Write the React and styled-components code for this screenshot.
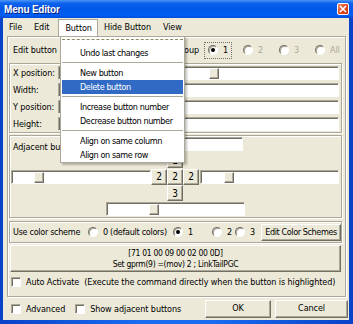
import React from 'react';
import styled, { createGlobalStyle, css } from 'styled-components';

const GlobalStyle = createGlobalStyle`
  *, *::before, *::after { box-sizing: border-box; }
  html, body { margin: 0; padding: 0; }
  body {
    font-family: "DejaVu Sans Condensed", "DejaVu Sans", "Liberation Sans", sans-serif;
    font-stretch: condensed;
    font-size: 9px;
    letter-spacing: -0.1px;
    color: #000;
  }
`;

const etched = css`
  border: 1px solid #aca899;
  box-shadow: 1px 1px 0 #fff, inset 1px 1px 0 #fff;
`;

const raised = css`
  background: #ece9d8;
  border: 1px solid;
  border-color: #fff #716f64 #716f64 #fff;
  box-shadow: inset -1px -1px 0 #aca899;
`;

const sunken = css`
  background: #fff;
  border: 1px solid;
  border-color: #aca899 #fff #fff #aca899;
  box-shadow: inset 1px 1px 0 #716f64;
`;

const Window = styled.div`
  width: 353px;
  height: 324px;
  display: flex;
  flex-direction: column;
  background: linear-gradient(to right, #0842c8, #1a6cf0 40%, #1a6cf0 60%, #0842c8);
  overflow: hidden;
`;

const TitleBar = styled.div`
  height: 18px;
  flex: none;
  display: flex;
  align-items: center;
  justify-content: space-between;
  padding: 0 4px 0 4px;
  background: linear-gradient(to bottom, #4a97f8 0%, #0d62ec 18%, #0058ea 50%, #005ef4 85%, #004bd8 100%);
`;

const Title = styled.span`
  font-family: "Liberation Sans", sans-serif;
  font-weight: bold;
  font-size: 10px;
  letter-spacing: -0.2px;
  color: #fff;
  text-shadow: 1px 1px 0 #0a1f80;
`;

const CloseBox = styled.div`
  width: 12px;
  height: 12px;
  border: 1px solid #fff;
  border-radius: 2px;
  background: linear-gradient(135deg, #f08a68, #e0441c 60%, #c8340e);
  display: flex;
  align-items: center;
  justify-content: center;
`;

const Frame = styled.div`
  flex: 1;
  margin: 0 4px 4px 3px;
  background: #ece9d8;
  position: relative;
  display: flex;
  flex-direction: column;
`;

const MenuBar = styled.div`
  height: 18px;
  flex: none;
  display: flex;
  align-items: stretch;
`;

const MenuItem = styled.div`
  padding: 0 6px;
  display: flex;
  align-items: center;
  position: relative;
  z-index: 2;
  ${p => p.$open && css`
    background: #fff;
    border: 1px solid #aca899;
    border-bottom: none;
    margin: 1px 0 0 3px;
    padding: 0 5px 0 6px;
  `}
`;

const Dropdown = styled.div`
  position: absolute;
  left: 57px;
  top: 18px;
  width: 125px;
  background: #fff;
  border: 1px solid #aca899;
  box-shadow: 2px 2px 2px rgba(0, 0, 0, 0.25);
  z-index: 1;
  display: flex;
  flex-direction: column;
  padding: 0 1px;
  letter-spacing: -0.4px;
`;

const TearOff = styled.div`
  height: 9px;
  padding-top: 2px;
  &::before {
    content: "";
    display: block;
    border-top: 1px dashed #8d8961;
  }
`;

const DropItem = styled.div`
  height: 14px;
  display: flex;
  align-items: center;
  padding-left: 18px;
  ${p => p.$active && css`
    background: #316ac5;
    color: #fff;
  `}
`;

const DropSep = styled.div`
  height: 6px;
  padding-top: 2px;
  &::before {
    content: "";
    display: block;
    border-top: 1px solid #aca899;
  }
`;

const Outer = styled.div`
  ${etched};
  margin: 0 3px 0 4px;
  height: 261px;
  flex: none;
  display: flex;
  flex-direction: column;
`;

const HeaderRow = styled.div`
  height: 26px;
  display: flex;
  align-items: center;
  padding: 0 0 0 5px;
`;

const RadioGroup = styled.div`
  margin-left: auto;
  display: flex;
  align-items: center;
`;

const GroupLabel = styled.span`
  margin-right: 5px;
`;

const RadioOpt = styled.label`
  display: flex;
  align-items: center;
  gap: 5px;
  height: 17px;
  flex: none;
  white-space: nowrap;
  width: ${p => (p.$w ? `${p.$w}px` : 'auto')};
  color: ${p => (p.$disabled ? '#aca899' : '#000')};
  ${p => p.$focused && css`
    outline: 1px dotted #6f6f6f;
    outline-offset: -1px;
    padding-left: 4px;
    margin-right: 11px;
  `}
`;

const RadioDot = styled.span`
  width: 10px;
  height: 10px;
  border-radius: 50%;
  border: 1px solid;
  border-color: #716f64 #fff #fff #716f64;
  background: #fff;
  box-shadow: inset 1px 1px 0 #aca899;
  display: flex;
  align-items: center;
  justify-content: center;
  flex: none;
  &::after {
    content: "";
    width: 4px;
    height: 4px;
    border-radius: 50%;
    background: ${p => (p.$checked ? '#000' : 'transparent')};
  }
`;

const Panel = styled.div`
  ${etched};
  margin-left: 1px;
  width: 333px;
  flex: none;
`;

const PosBox = styled(Panel)`
  height: 70px;
  padding: 1px 2px 0 3px;
  display: flex;
  flex-direction: column;
`;

const PosRow = styled.div`
  height: 17px;
  display: flex;
  align-items: center;
`;

const FieldLabel = styled.span`
  width: 45px;
  flex: none;
  white-space: nowrap;
`;

const Field = styled.div`
  ${sunken};
  flex: ${p => (p.$w ? 'none' : 1)};
  width: ${p => (p.$w ? `${p.$w}px` : 'auto')};
  height: 14px;
  position: relative;
`;

const Thumb = styled.span`
  position: absolute;
  top: 1px;
  width: 10px;
  height: 11px;
  ${raised};
`;

const AdjBox = styled(Panel)`
  margin-top: 2px;
  height: 83px;
  display: flex;
  flex-direction: column;
`;

const AdjRow = styled.div`
  height: ${p => p.$h || 16}px;
  display: flex;
  align-items: center;
  padding-left: ${p => p.$pl || 0}px;
`;

const AdjLabel = styled.span`
  width: 94px;
  padding-left: 3px;
  margin-top: 5px;
  flex: none;
  white-space: nowrap;
  overflow: hidden;
`;

const CrossBtn = styled.div`
  ${raised};
  width: 16px;
  height: 16px;
  flex: none;
  display: flex;
  align-items: center;
  justify-content: center;
  font-size: 10px;
`;

const ColorBox = styled(Panel)`
  margin-top: 3px;
  height: 22px;
  display: flex;
  align-items: center;
  padding: 0 0 0 3px;
  letter-spacing: -0.3px;
`;

const ColorLabel = styled.span`
  width: 75px;
  flex: none;
  white-space: nowrap;
`;

const PushButton = styled.div`
  ${raised};
  display: flex;
  flex-direction: column;
  align-items: center;
  justify-content: center;
  flex: none;
  white-space: nowrap;
  width: ${p => p.$w}px;
  height: ${p => p.$h}px;
  margin-left: ${p => p.$ml || 0}px;
  letter-spacing: ${p => p.$ls ?? -0.1}px;
  font-size: ${p => p.$fs || 9}px;
  line-height: 11px;
`;

const CheckRow = styled.div`
  display: flex;
  align-items: center;
  height: ${p => p.$h}px;
  padding-left: ${p => p.$pl}px;
`;

const CheckItem = styled.label`
  display: flex;
  align-items: center;
  gap: 5px;
  margin-right: ${p => p.$mr || 0}px;
  white-space: nowrap;
`;

const CheckBox = styled.span`
  ${sunken};
  width: 10px;
  height: 10px;
  flex: none;
`;

const Footer = styled.div`
  flex: 1;
  display: flex;
  align-items: center;
  padding-left: 8px;
`;

const FooterButtons = styled.div`
  margin-left: auto;
  display: flex;
  gap: 4px;
  padding-right: 1px;
`;

const Radio = ({ children, checked, disabled, focused, w }) => (
  <RadioOpt $disabled={disabled} $focused={focused} $w={w}>
    <RadioDot $checked={checked} />
    <span>{children}</span>
  </RadioOpt>
);

export default function App() {
  return (
    <>
      <GlobalStyle />
      <Window>
        <TitleBar>
          <Title>Menu Editor</Title>
          <CloseBox>
            <svg width="8" height="8" viewBox="0 0 8 8">
              <path d="M1 1 L7 7 M7 1 L1 7" stroke="#fff" strokeWidth="1.6" />
            </svg>
          </CloseBox>
        </TitleBar>
        <Frame>
          <MenuBar>
            <MenuItem>File</MenuItem>
            <MenuItem>Edit</MenuItem>
            <MenuItem $open>Button</MenuItem>
            <MenuItem>Hide Button</MenuItem>
            <MenuItem>View</MenuItem>
          </MenuBar>

          <Dropdown>
            <TearOff />
            <DropItem>Undo last changes</DropItem>
            <DropSep />
            <DropItem>New button</DropItem>
            <DropItem $active>Delete button</DropItem>
            <DropSep />
            <DropItem>Increase button number</DropItem>
            <DropItem>Decrease button number</DropItem>
            <DropSep />
            <DropItem>Align on same column</DropItem>
            <DropItem>Align on same row</DropItem>
          </Dropdown>

          <Outer>
            <HeaderRow>
              <span>Edit button</span>
              <RadioGroup>
                <GroupLabel>Group</GroupLabel>
                <Radio checked focused w={28}>1</Radio>
                <Radio disabled w={36}>2</Radio>
                <Radio disabled w={36}>3</Radio>
                <Radio disabled w={30}>All</Radio>
              </RadioGroup>
            </HeaderRow>

            <PosBox>
              <PosRow>
                <FieldLabel>X position:</FieldLabel>
                <Field>
                  <Thumb style={{ left: 150 }} />
                </Field>
              </PosRow>
              <PosRow>
                <FieldLabel>Width:</FieldLabel>
                <Field />
              </PosRow>
              <PosRow>
                <FieldLabel>Y position:</FieldLabel>
                <Field />
              </PosRow>
              <PosRow>
                <FieldLabel>Height:</FieldLabel>
                <Field />
              </PosRow>
            </PosBox>

            <AdjBox>
              <AdjRow>
                <AdjLabel>Adjacent buttons</AdjLabel>
                <Field $w={139}>
                  <Thumb style={{ left: 42 }} />
                </Field>
              </AdjRow>
              <AdjRow $pl={157}>
                <CrossBtn>1</CrossBtn>
              </AdjRow>
              <AdjRow $h={17} $pl={1}>
                <Field $w={140}>
                  <Thumb style={{ left: 22 }} />
                </Field>
                <CrossBtn>2</CrossBtn>
                <CrossBtn>2</CrossBtn>
                <CrossBtn>2</CrossBtn>
                <Field $w={139} style={{ marginLeft: 1 }}>
                  <Thumb style={{ left: 23 }} />
                </Field>
              </AdjRow>
              <AdjRow $pl={157}>
                <CrossBtn>3</CrossBtn>
              </AdjRow>
              <AdjRow $pl={96}>
                <Field $w={139}>
                  <Thumb style={{ left: 42 }} />
                </Field>
              </AdjRow>
            </AdjBox>

            <ColorBox>
              <ColorLabel>Use color scheme</ColorLabel>
              <Radio w={85}>0 (default colors)</Radio>
              <Radio checked w={39}>1</Radio>
              <Radio w={23}>2</Radio>
              <Radio w={26}>3</Radio>
              <PushButton $w={80} $h={17} $ls={-0.4}>
                Edit Color Schemes
              </PushButton>
            </ColorBox>

            <PushButton $w={331} $h={27} $ml={2} $fs={8.5} $ls={-0.3} style={{ marginTop: 2 }}>
              <span>[71 01 00 09 00 02 00 0D]</span>
              <span>Set gprm(9) =(mov) 2 ; LinkTailPGC</span>
            </PushButton>

            <CheckRow $h={19} $pl={3}>
              <CheckItem>
                <CheckBox />
                <span>Auto Activate&nbsp; (Execute the command directly when the button is highlighted)</span>
              </CheckItem>
            </CheckRow>
          </Outer>

          <Footer>
            <CheckItem $mr={10}>
              <CheckBox />
              <span>Advanced</span>
            </CheckItem>
            <CheckItem>
              <CheckBox />
              <span>Show adjacent buttons</span>
            </CheckItem>
            <FooterButtons>
              <PushButton $w={66} $h={18}>OK</PushButton>
              <PushButton $w={73} $h={18}>Cancel</PushButton>
            </FooterButtons>
          </Footer>
        </Frame>
      </Window>
    </>
  );
}
